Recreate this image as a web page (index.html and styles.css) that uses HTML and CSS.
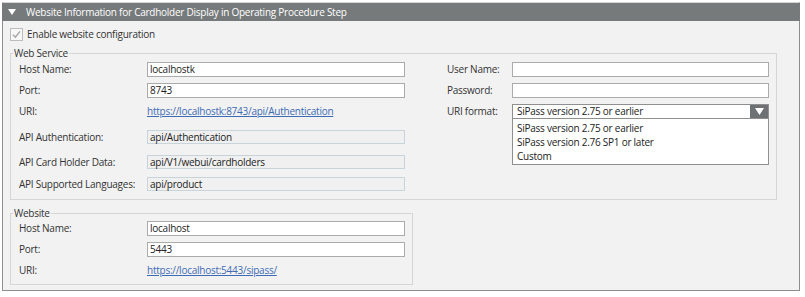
FILE: index.html
```html
<!DOCTYPE html>
<html lang="en">
<head>
    <meta charset="UTF-8">
    <title>Website Information</title>
    <link rel="stylesheet" href="styles.css">
</head>
<body>

<div class="panel">
    <div class="panel-head">
        <svg class="caret" width="8" height="6" viewBox="0 0 8 6"><polygon points="0,0 8,0 4,6" fill="#fff"/></svg>
        Website Information for Cardholder Display in Operating Procedure Step
    </div>

    <div class="panel-body">
        <label class="check-row">
            <span class="checkbox">
                <svg width="11" height="11" viewBox="0 0 11 11"><path d="M2 5.8 L4.4 8.3 L9 2.4" fill="none" stroke="#a3a3a3" stroke-width="1.4"/></svg>
            </span>
            Enable website configuration
        </label>

        <!-- Web Service -->
        <fieldset class="group group-service">
            <legend>Web Service</legend>
            <div class="service-cols">
                <div class="form-grid rows-service">
                    <span class="lbl">Host Name:</span>
                    <span class="field">localhostk</span>
                    <span class="lbl">Port:</span>
                    <span class="field">8743</span>
                    <span class="lbl">URI:</span>
                    <a href="#" class="uri">https://localhostk:8743/api/Authentication</a>
                    <span class="lbl">API Authentication:</span>
                    <span class="field readonly">api/Authentication</span>
                    <span class="lbl">API Card Holder Data:</span>
                    <span class="field readonly">api/V1/webui/cardholders</span>
                    <span class="lbl">API Supported Languages:</span>
                    <span class="field readonly">api/product</span>
                </div>

                <div class="form-grid form-right">
                    <span class="lbl">User Name:</span>
                    <span class="field"></span>
                    <span class="lbl">Password:</span>
                    <span class="field"></span>
                    <span class="lbl">URI format:</span>
                    <div class="combo">
                        <span class="combo-text">SiPass version 2.75 or earlier</span>
                        <span class="combo-btn">
                            <svg width="9" height="7" viewBox="0 0 9 7"><polygon points="0,0 9,0 4.5,7" fill="#fff"/></svg>
                        </span>
                        <div class="combo-list">
                            <div>SiPass version 2.75 or earlier</div>
                            <div>SiPass version 2.76 SP1 or later</div>
                            <div>Custom</div>
                        </div>
                    </div>
                </div>
            </div>
        </fieldset>

        <!-- Website -->
        <fieldset class="group group-site">
            <legend>Website</legend>
            <div class="form-grid rows-site">
                <span class="lbl">Host Name:</span>
                <span class="field">localhost</span>
                <span class="lbl">Port:</span>
                <span class="field">5443</span>
                <span class="lbl">URI:</span>
                <a href="#" class="uri">https://localhost:5443/sipass/</a>
            </div>
        </fieldset>
    </div>
</div>

</body>
</html>
```

FILE: styles.css
```css
body {
    margin: 0;
    background: #fff;
    font-family: "Open Sans", "Noto Sans", sans-serif;
    font-size: 10px;
    letter-spacing: -0.25px;
    color: #333;
}

/* 外枠 */
.panel {
    width: 798px;
    margin: 2px 0 0 2px;
    box-sizing: border-box;
    border: 1px solid #8e8e8e;
    border-top-color: #d4d4d4;
    background: #f2f2f2;
}

/* タイトル帯 */
.panel-head {
    height: 18px;
    margin: 0 -1px;
    display: flex;
    align-items: center;
    background: #767a7b;
    color: #fff;
}

.caret {
    margin: 0 10px 0 6px;
}

.panel-body {
    padding: 6px 22px 5px 7px;
}

/* チェックボックス */
.check-row {
    display: flex;
    align-items: center;
    gap: 4px;
    height: 14px;
}

.checkbox {
    width: 13px;
    height: 13px;
    box-sizing: border-box;
    border: 1px solid #bcbcbc;
    background: #f7f7f7;
    display: flex;
}

/* グループ枠 */
.group {
    margin: 4px 0 0;
    padding: 1px 1px 7px 2px;
    border: 1px solid #d6d6d6;
    min-width: 0;
}

.group legend {
    padding: 0 1px;
    line-height: 16px;
}

.group-site {
    width: fit-content;
    margin-top: 5px;
    padding: 0 1px 6px 2px;
}

.service-cols {
    display: flex;
    gap: 42px;
    padding-left: 6px;
}

.form-grid {
    display: grid;
    grid-template-columns: 128px 258px;
    align-items: start;
}

.rows-service {
    grid-template-rows: 21px 21px 26px 25px 22px 15px;
}

.form-right {
    grid-template-columns: 65px 257px;
    grid-template-rows: 21px 21px 15px;
}

.rows-site {
    grid-template-rows: 21px 21px 15px;
    padding: 0 6px;
}

.lbl {
    line-height: 15px;
}

.field {
    height: 15px;
    box-sizing: border-box;
    border: 1px solid #ababab;
    background: #fff;
    padding: 0 2px;
    line-height: 13px;
    color: #222;
}

.field.readonly {
    height: 14px;
    line-height: 12px;
    background: #f0f0f0;
    border-color: #c8d4dc;
}

.uri {
    line-height: 15px;
    color: #3d6cb4;
    text-decoration: underline;
    justify-self: start;
}

/* コンボボックス */
.combo {
    position: relative;
    height: 15px;
    box-sizing: border-box;
    border: 1px solid #8f8f8f;
    background: #fff;
    display: flex;
}

.combo-text {
    flex: 1;
    padding-left: 4px;
    line-height: 13px;
    color: #222;
}

.combo-btn {
    width: 18px;
    background: #6e7274;
    display: flex;
    align-items: center;
    justify-content: center;
}

.combo-list {
    position: absolute;
    top: calc(100% + 1px);
    left: -1px;
    right: -1px;
    border: 1px solid #8f8f8f;
    border-top: 0;
    background: #fff;
    padding: 2px 0 1px;
    color: #222;
}

.combo-list div {
    line-height: 14px;
    padding-left: 4px;
}
```
